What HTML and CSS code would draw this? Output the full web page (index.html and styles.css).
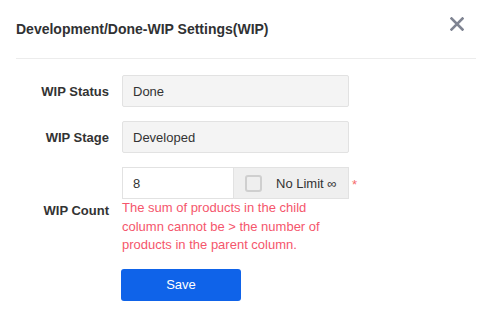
FILE: index.html
```html
<!DOCTYPE html>
<html>
<head>
    <meta charset="utf-8" />
    <meta name="viewport" content="width=device-width, initial-scale=1" />
    <title>WIP Settings</title>
    <link rel="stylesheet" href="styles.css">
</head>
<body>
    <div class="dialog">
        <div class="dialog-header">
            <span class="dialog-title">Development/Done-WIP Settings(WIP)</span>
            <button class="close-btn" aria-label="Close">
                <svg width="14" height="14" viewBox="0 0 14 14">
                    <path d="M1.5 1.5 L12.5 12.5 M12.5 1.5 L1.5 12.5" stroke="#7f8492" stroke-width="2.6" stroke-linecap="square" />
                </svg>
            </button>
        </div>
        <form class="wip-form">
            <div class="form-row">
                <label class="form-label">WIP Status</label>
                <div class="form-field">
                    <input class="text-input" type="text" value="Done" disabled />
                </div>
            </div>
            <div class="form-row">
                <label class="form-label">WIP Stage</label>
                <div class="form-field">
                    <input class="text-input" type="text" value="Developed" disabled />
                </div>
            </div>
            <div class="form-row">
                <label class="form-label">WIP Count</label>
                <div class="form-field">
                    <div class="count-group">
                        <input class="count-input" type="text" value="8" />
                        <label class="no-limit">
                            <span class="checkbox"></span>
                            <span>No Limit ∞</span>
                        </label>
                        <span class="required">*</span>
                    </div>
                    <div class="error-text">The sum of products in the child column cannot be &gt; the number of products in the parent column.</div>
                </div>
            </div>
            <div class="form-actions">
                <button type="submit" class="save-btn">Save</button>
            </div>
        </form>
    </div>
</body>
</html>
```
FILE: styles.css
```css
body {
    margin: 0;
    background-color: white;
    color: #333;
    font-family: 'Liberation Sans', Arial, sans-serif;
    font-size: 13px;
}

.dialog {
    width: 493px;
    height: 321px;
    box-sizing: border-box;
    padding: 0 17px 0 16px;
}

.dialog-header {
    display: flex;
    align-items: center;
    justify-content: space-between;
    height: 58px;
    border-bottom: 1px solid #ececec;
}

.dialog-title {
    font-size: 14px;
    font-weight: bold;
    color: #303133;
}

.close-btn {
    border: none;
    background: none;
    padding: 0;
    margin-right: 12px;
    margin-bottom: 10px;
    width: 14px;
    height: 14px;
    cursor: pointer;
}

.close-btn svg {
    display: block;
}

.wip-form {
    padding-top: 16px;
}

.form-row {
    display: flex;
    align-items: center;
    margin-bottom: 14px;
}

.form-label {
    width: 93px;
    padding-right: 13px;
    text-align: right;
    font-weight: bold;
    color: #333;
    flex-shrink: 0;
}

.form-field {
    display: flex;
    flex-direction: column;
}

.text-input {
    width: 227px;
    height: 32px;
    box-sizing: border-box;
    padding: 0 10px;
    border: 1px solid #e2e2e2;
    border-radius: 2px;
    background-color: #f4f4f4;
    color: #333;
    font-family: inherit;
    font-size: 13px;
    margin: 0;
}

.count-group {
    display: flex;
    align-items: center;
}

.count-input {
    width: 111px;
    height: 32px;
    box-sizing: border-box;
    padding: 0 10px;
    border: 1px solid #e2e2e2;
    border-right: none;
    background-color: white;
    color: #333;
    font-family: inherit;
    font-size: 13px;
    margin: 0;
}

.no-limit {
    display: flex;
    align-items: center;
    gap: 14px;
    width: 116px;
    height: 32px;
    box-sizing: border-box;
    padding-left: 11px;
    border: 1px solid #e2e2e2;
    background-color: #efefef;
    color: #333;
}

.checkbox {
    width: 17px;
    height: 17px;
    box-sizing: border-box;
    border: 2px solid #cfcfcf;
    border-radius: 3px;
    background-color: #efefef;
}

.required {
    color: #f56c6c;
    margin-left: 3px;
    margin-top: 3px;
    font-size: 13px;
}

.error-text {
    width: 215px;
    color: #f5566c;
    line-height: 18.5px;
}

.form-actions {
    padding-left: 105px;
}

.save-btn {
    width: 120px;
    height: 32px;
    border: none;
    border-radius: 3px;
    background-color: #0f63e9;
    color: white;
    font-family: inherit;
    font-size: 13px;
    cursor: pointer;
}
```
